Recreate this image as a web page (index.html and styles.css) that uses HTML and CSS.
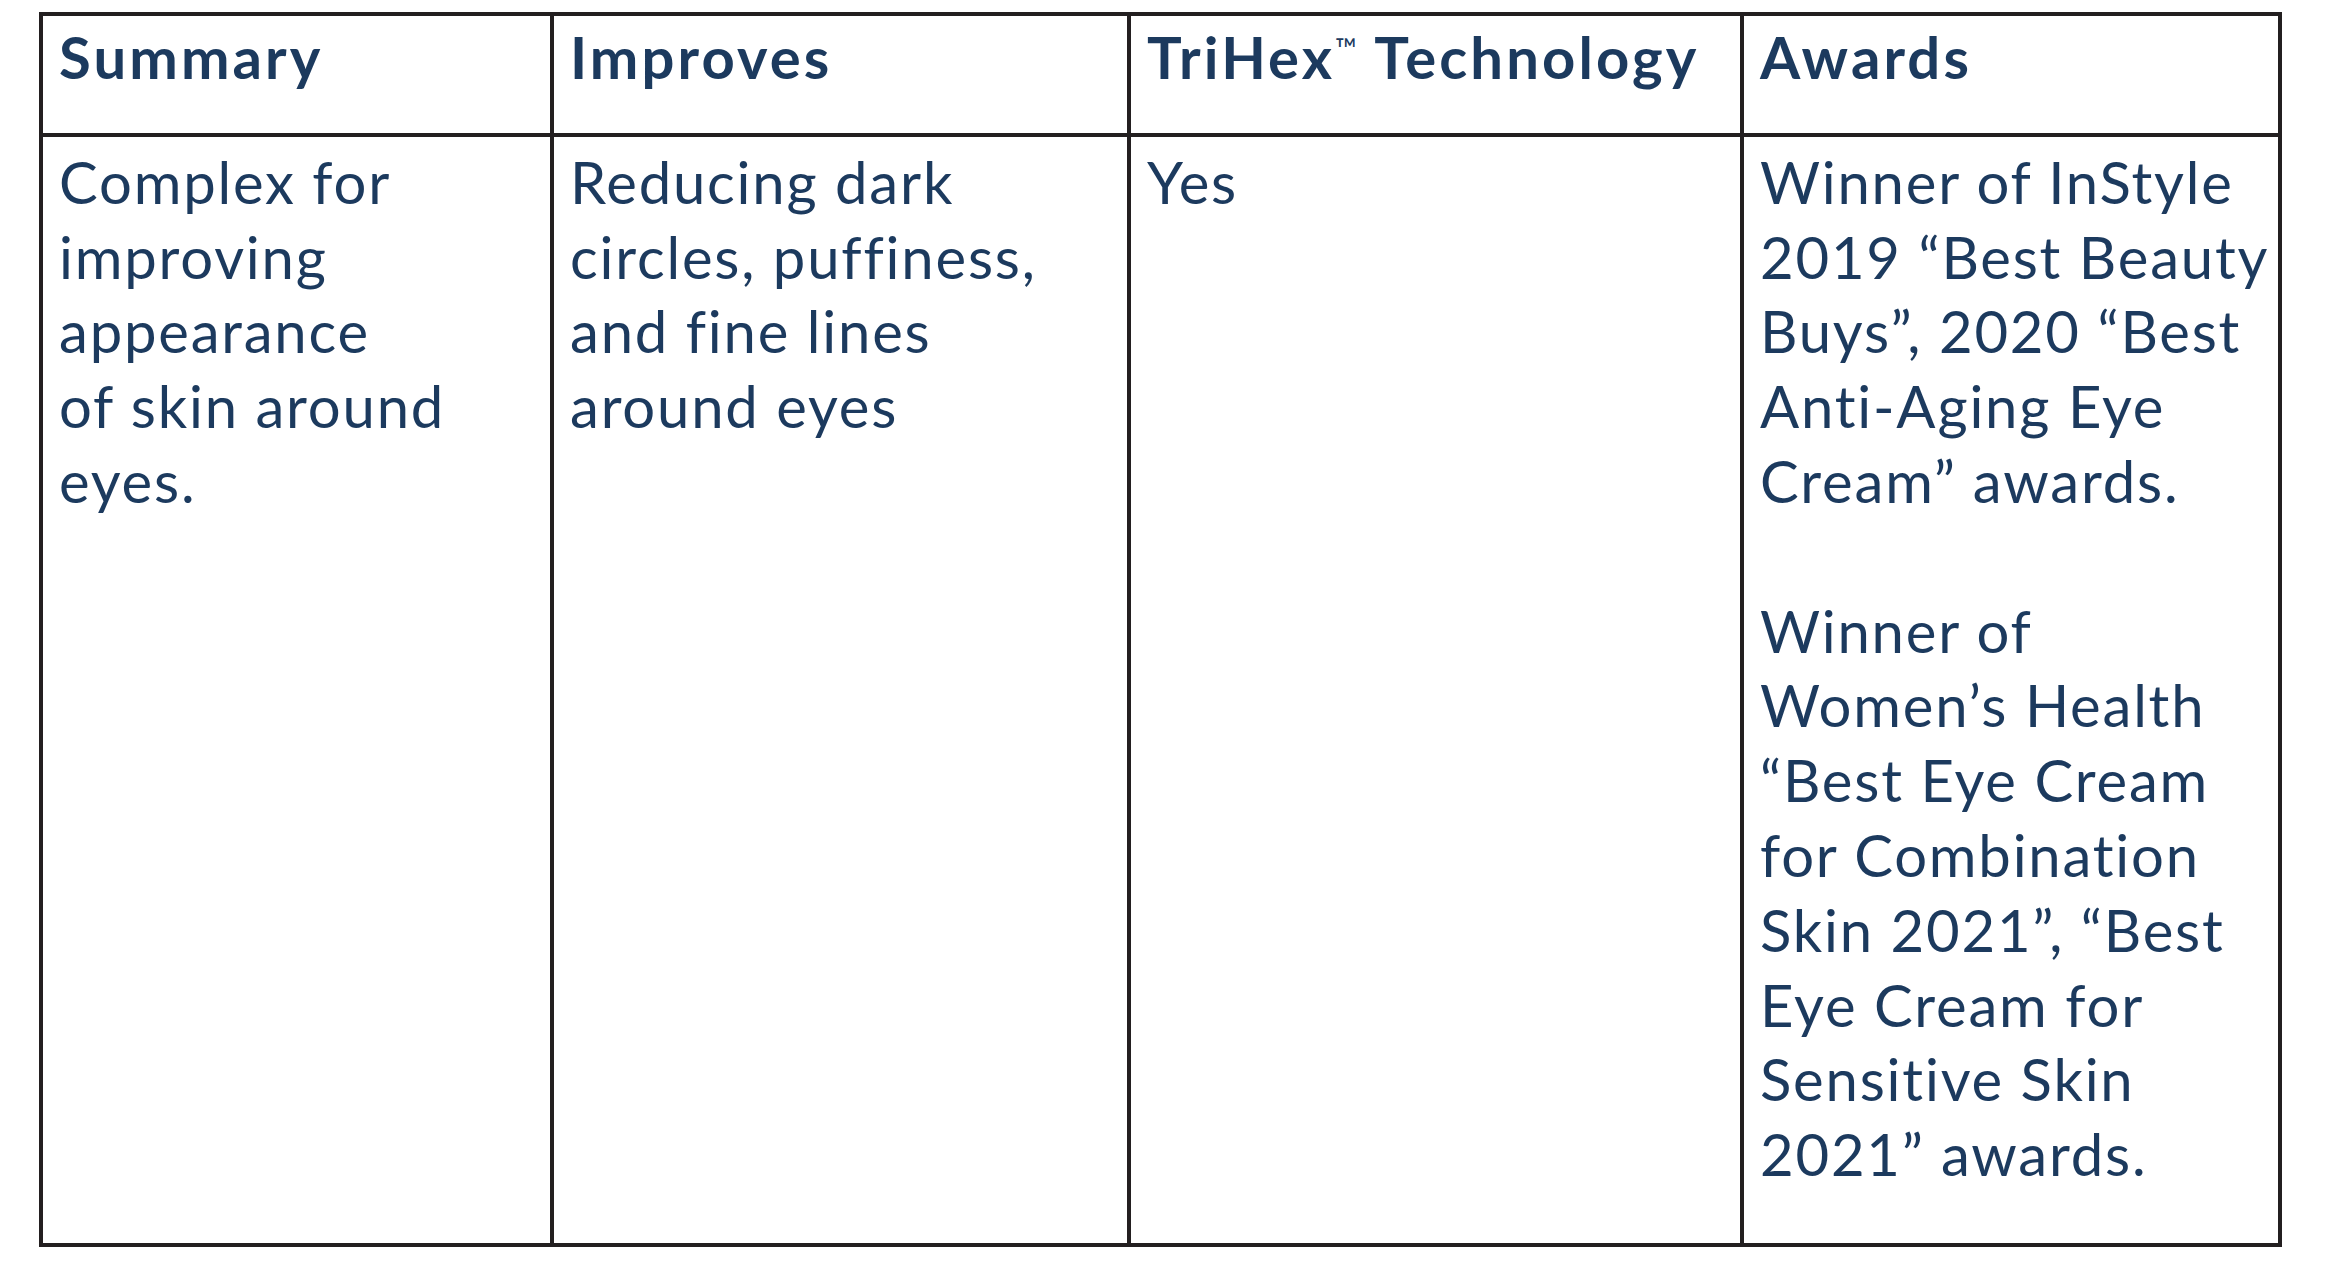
FILE: index.html
```html
<!DOCTYPE html>
<html lang="en">
<head>
<meta charset="utf-8">
<title>Eye Cream Comparison</title>
<link rel="stylesheet" href="styles.css">
</head>
<body>
<div class="grid-table">
  <div class="cell head">Summary</div>
  <div class="cell head">Improves</div>
  <div class="cell head">TriHex<span class="tm">™</span> Technology</div>
  <div class="cell head">Awards</div>

  <div class="cell body"><p>Complex for<br>improving<br>appearance<br>of skin around<br>eyes.</p></div>
  <div class="cell body"><p>Reducing dark<br>circles, puffiness,<br>and fine lines<br>around eyes</p></div>
  <div class="cell body"><p>Yes</p></div>
  <div class="cell body">
    <p>Winner of InStyle<br>2019 “Best Beauty<br>Buys”, 2020 “Best<br>Anti-Aging Eye<br>Cream” awards.</p>
    <p>Winner of<br>Women’s Health<br>“Best Eye Cream<br>for Combination<br>Skin 2021”, “Best<br>Eye Cream for<br>Sensitive Skin<br>2021” awards.</p>
  </div>
</div>
</body>
</html>
```
FILE: styles.css
```css
html, body {
  background: #ffffff;
}
body {
  margin: 0;
  padding: 12px 0 0 39px;
  font-family: Lato, "Liberation Sans", sans-serif;
  color: #1c3a5e;
}
.grid-table {
  display: grid;
  grid-template-columns: 511px 577px 613px 538px;
  width: max-content;
  border-top: 4px solid #231f20;
  border-left: 4px solid #231f20;
}
.cell {
  box-sizing: border-box;
  border-right: 4px solid #231f20;
  border-bottom: 4px solid #231f20;
  font-size: 58px;
  line-height: 74.8px;
  padding-left: 16px;
  padding-right: 6px;
}
.head {
  font-weight: 700;
  letter-spacing: 3.1px;
  padding-top: 4px;
  padding-bottom: 38px;
  white-space: nowrap;
}
.tm {
  font-weight: 400;
  font-size: 0.5em;
  letter-spacing: 0;
  vertical-align: 0.7em;
  line-height: 0;
  margin-right: 2px;
}
.body {
  font-weight: 400;
  letter-spacing: 1.8px;
  padding-top: 8px;
  padding-bottom: 51px;
}
.body p {
  margin: 0 0 74.8px 0;
  white-space: nowrap;
}
.body p:last-child {
  margin-bottom: 0;
}
```
